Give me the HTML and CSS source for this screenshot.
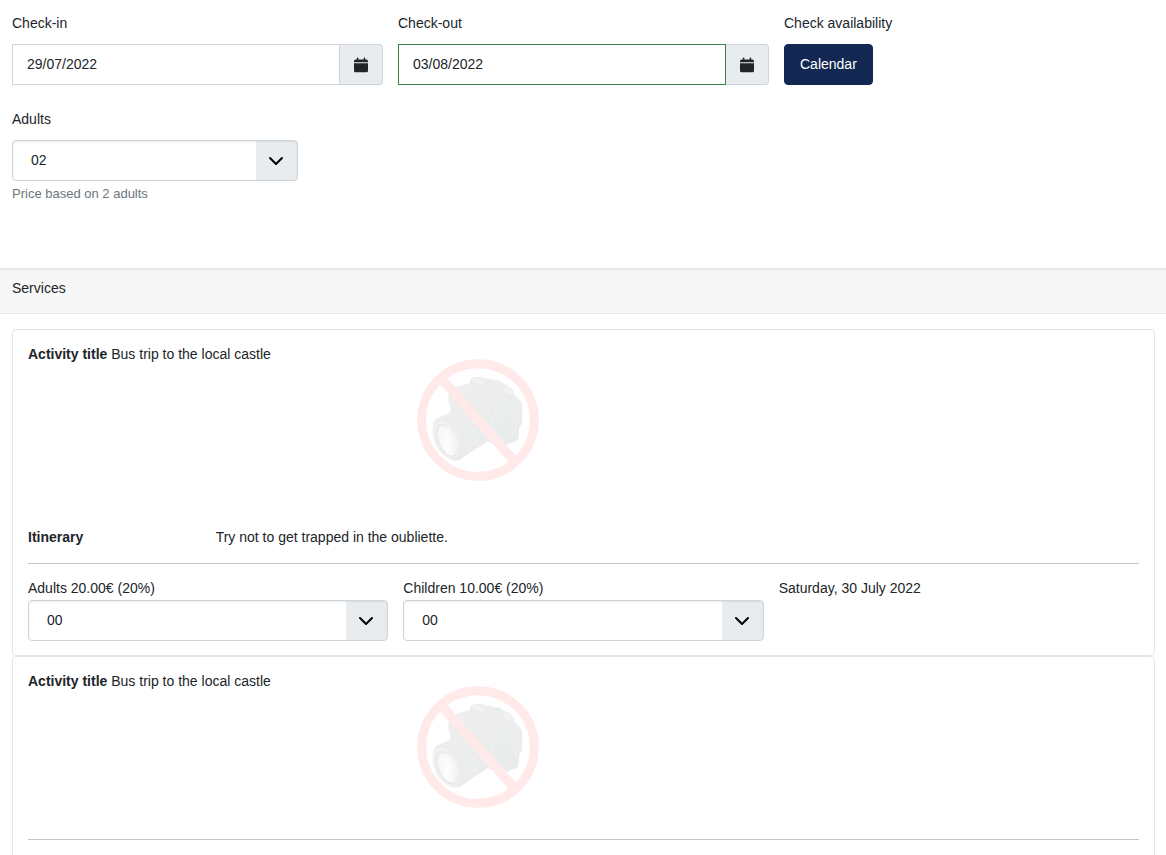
FILE: index.html
```html
<!DOCTYPE html>
<html lang="en">
<head>
<meta charset="utf-8">
<meta name="viewport" content="width=device-width, initial-scale=1">
<title>Booking</title>
<link rel="stylesheet" href="styles.css">
</head>
<body>
<svg class="defs" aria-hidden="true">
  <defs>
    <linearGradient id="lens" x1="0" y1="0" x2="1" y2="1">
      <stop offset="0" stop-color="#f2f3f3"/>
      <stop offset="0.5" stop-color="#fdfdfd"/>
      <stop offset="1" stop-color="#eeefef"/>
    </linearGradient>
    <linearGradient id="body" x1="0" y1="0" x2="1" y2="1">
      <stop offset="0" stop-color="#eeeeee"/>
      <stop offset="1" stop-color="#e9ebeb"/>
    </linearGradient>
  </defs>
  <symbol id="calendar" viewBox="0 0 14 16">
    <path d="M0 4.3Q0 2.6 1.600 2.600H2.800V1.300Q2.800.5 3.600.5T4.400 1.300V2.600H9.600V1.300Q9.600.5 10.400.5T11.200 1.300V2.600H12.400Q14 2.600 14 4.300V5.300H0ZM0 6.300H14V13.700Q14 15.200 12.500 15.200H1.500Q0 15.200 0 13.700Z"/>
  </symbol>
  <symbol id="no-photo" viewBox="12 15 450 450">
    <path fill="url(#body)" d="M149 163Q152 148 168 141L212 130Q213 114 226 111L247 111L281 119Q305 119 312 130L337 143Q346 153 346 164L362 180Q370 187 370 210L369 250L361 262L359 294Q357 302 345 306L304 321L266 304L236 323L181 361Q163 366 145 354Q117 333 103 291Q97 257 110 238L128 229L153 218L155 205L148 185Z"/>
    <path fill="#f2f3f3" d="M216 117L240 113L254 127L251 135L229 129Z"/>
    <path fill="#f2f3f1" d="M314 137L334 144L344 160L336 164L315 155Z"/>
    <g fill="none" stroke="#f2f3f3" stroke-width="2">
      <path d="M158 168L213 139L269 137L308 148"/>
      <path d="M347 168Q361 190 355 224L350 278"/>
      <path d="M273 172Q299 188 285 222T294 287"/>
      <path d="M244 176Q274 197 268 225M314 202L305 208L311 219L322 212Z"/>
      <path d="M151 226Q198 238 212 331M184 220Q221 239 235 315"/>
      <path d="M324 128Q335 144 333 158M365 207L370 207M365 218L369 218"/>
    </g>
    <ellipse cx="141" cy="299" rx="35" ry="60" transform="rotate(-24 141 299)" fill="#f1f2f2"/>
    <ellipse cx="143" cy="302" rx="29" ry="54" transform="rotate(-24 143 302)" fill="#e9ebeb"/>
    <ellipse cx="146" cy="302" rx="25" ry="47" transform="rotate(-24 146 302)" fill="url(#lens)"/>
    <path d="M122 259Q148 259 160 301L169 338" fill="none" stroke="#f3f4f4" stroke-width="3"/>
    <circle cx="237" cy="240" r="169" fill="none" stroke="#ffe9e9" stroke-width="27"/>
    <path d="M128 116L346 364" stroke="#ffe9e9" stroke-width="29"/>
  </symbol>
</svg>

<form>
  <section class="search">
    <div class="columns">
      <div class="field">
        <label for="checkin">Check-in</label>
        <div class="date">
          <input id="checkin" type="text" value="29/07/2022">
          <button type="button" aria-label="Pick check-in date"><svg class="icon"><use href="#calendar"/></svg></button>
        </div>
      </div>
      <div class="field">
        <label for="checkout">Check-out</label>
        <div class="date">
          <input id="checkout" class="valid" type="text" value="03/08/2022">
          <button type="button" aria-label="Pick check-out date"><svg class="icon"><use href="#calendar"/></svg></button>
        </div>
      </div>
      <div class="field">
        <label for="availability">Check availability</label>
        <button id="availability" class="primary" type="button">Calendar</button>
      </div>
    </div>
    <div class="field guests">
      <label for="adults">Adults</label>
      <select id="adults"><option>01</option><option selected>02</option></select>
      <small>Price based on 2 adults</small>
    </div>
  </section>

  <header class="band">Services</header>

  <main class="services">
    <article class="card">
      <div class="columns">
        <div><strong>Activity title</strong> Bus trip to the local castle</div>
        <svg class="photo" role="img" aria-label="No photo"><use href="#no-photo"/></svg>
      </div>
      <div class="details">
        <strong>Itinerary</strong>
        <div class="text">Try not to get trapped in the oubliette.</div>
      </div>
      <hr>
      <div class="columns">
        <div class="option">
          <label for="a1">Adults 20.00€ (20%)</label>
          <select id="a1"><option>00</option><option>01</option><option>02</option></select>
        </div>
        <div class="option">
          <label for="c1">Children 10.00€ (20%)</label>
          <select id="c1"><option>00</option><option>01</option><option>02</option></select>
        </div>
        <div>Saturday, 30 July 2022</div>
      </div>
    </article>
    <article class="card">
      <div class="columns">
        <div><strong>Activity title</strong> Bus trip to the local castle</div>
        <svg class="photo" role="img" aria-label="No photo"><use href="#no-photo"/></svg>
      </div>
      <hr>
    </article>
  </main>
</form>
</body>
</html>
```
FILE: styles.css
```css
* { box-sizing: border-box; }

body {
  margin: 0;
  color: #212529;
  background: #fff;
  font: 14px/22px "Liberation Sans", Arial, sans-serif;
  overflow-x: hidden;
}

.defs {
  position: absolute;
  width: 0;
  height: 0;
}

.search {
  display: grid;
  gap: 23px;
  padding: 12px 11px 63px 12px;
}

.columns {
  display: grid;
  grid-template-columns: repeat(3, minmax(0, 1fr));
  gap: 15px;
}

.field {
  display: flex;
  flex-direction: column;
  align-items: flex-start;
}

.field label { margin-bottom: 10px; }

.guests { width: 25%; }

.guests small {
  margin-top: 2px;
  color: #6c757d;
  font-size: 13px;
}

input,
select,
button {
  height: 41px;
  margin: 0;
  border: 1px solid #ced4da;
  color: inherit;
  font: inherit;
}

.date {
  display: flex;
  width: 100%;
}

.date input {
  flex: 1;
  min-width: 0;
  padding: 0 14px 2px;
  background: #fff;
  border-radius: 0;
}

.date input.valid { border-color: #3c843f; }

.date button {
  display: flex;
  align-items: center;
  justify-content: center;
  width: 43px;
  padding: 0;
  border-left: 0;
  border-radius: 0 4px 4px 0;
  background: #e9ecef;
}

.icon {
  width: 14px;
  height: 16px;
  fill: #212529;
}

.primary {
  padding: 0 15px 2px;
  border-color: #122752;
  border-radius: 4px;
  background: #122752;
  color: #fff;
}

select {
  width: 100%;
  padding: 0 48px 2px 18px;
  appearance: none;
  border-radius: 4px;
  background:
    url("data:image/svg+xml,%3Csvg xmlns='http://www.w3.org/2000/svg' viewBox='0 0 16 16'%3E%3Cpath d='M2 5l6 6 6-6' fill='none' stroke='%23000' stroke-width='2' stroke-linecap='round' stroke-linejoin='round'/%3E%3C/svg%3E") right 13px center / 16px 16px no-repeat,
    linear-gradient(#e9ecef, #e9ecef) right / 41px 100% no-repeat,
    #fff;
  box-shadow: inset 0 1px 2px rgba(0, 0, 0, 0.08);
}

.band {
  padding: 7px 12px 14px;
  border-top: 2px solid #e5e8eb;
  border-bottom: 1px solid #e5e7e9;
  background: #f7f7f7;
}

.services { padding: 15px 11px 15px 12px; }

.card {
  padding: 13px 15px 14px;
  border: 1px solid #e2e5e9;
  border-radius: 4px;
}

.photo {
  display: block;
  width: 150px;
  height: 150px;
  margin: 2px 0;
}

.details {
  display: grid;
  grid-template-columns: repeat(6, minmax(0, 1fr));
  column-gap: 15px;
  padding-top: 29px;
}

.text { grid-column: span 5; }

hr {
  height: 1px;
  margin: 15px 0 13px;
  border: 0;
  background: #c3c5c6;
}

.option {
  display: flex;
  flex-direction: column;
  gap: 1px;
}
```
